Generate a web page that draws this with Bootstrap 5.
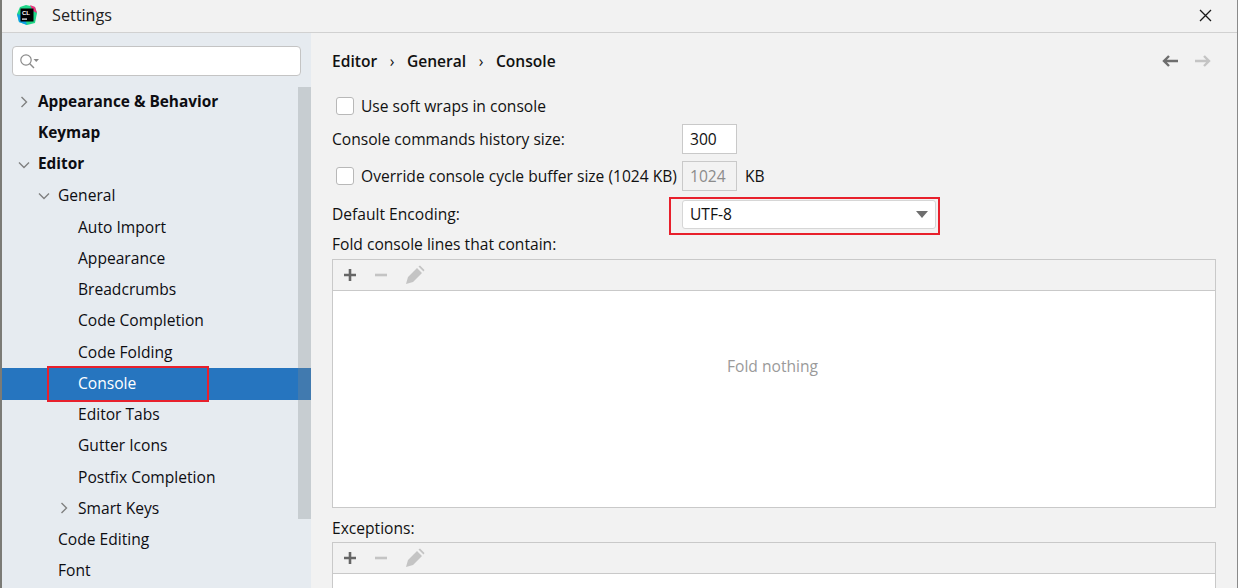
<!DOCTYPE html>
<html lang="en">
<head>
<meta charset="utf-8">
<title>Settings</title>
<link href="https://cdn.jsdelivr.net/npm/bootstrap@5.3.0/dist/css/bootstrap.min.css" rel="stylesheet">
<style>
html,body{height:588px;overflow:hidden;margin:0}
body{background:#f2f2f2;color:#111;font-family:"Open Sans","Noto Sans",sans-serif;font-size:15.6px;line-height:20px}
.win{height:588px;border-left:2px solid #7b7b76;border-right:1px solid #8a8a8a;display:flex;flex-direction:column;overflow:hidden}
.titlebar{height:33px;flex:none;border-bottom:1px solid #d1d1d1;padding-left:14px;padding-right:25px;padding-bottom:2px;background:#f2f2f2}
.titletext{margin-left:14px;color:#222;font-size:16.2px}
.panes{flex:1;min-height:0}
.side{width:309px;flex:none;background:#e6ebf0;position:relative;padding-top:13px;overflow:hidden}
.searchbox{height:30px;margin:0 10px;background:#fff;border:1px solid #c4c4c4;border-radius:4px;padding-left:6px}
.tree{margin-top:10px}
.trow{height:31.25px;display:flex;align-items:center;position:relative;color:#0d0d12}
.trow.bold{font-weight:700;font-size:15.4px}
.l0{padding-left:36px}.l1{padding-left:56px}.l2{padding-left:76px}
.chev{position:absolute;top:10px}
.l0 .chev{left:18px}.l1 .chev{left:38px}.l2 .chev{left:58px}
.chev.down{top:12px}
.l0 .chev.down{left:16px}.l1 .chev.down{left:36px}
.trow.sel{background:#2675bf;color:#fff;height:32px;margin-top:.5px;margin-bottom:-1.25px;padding-bottom:1px}
.redbox{position:absolute;border:2px solid #e8202c;pointer-events:none}
.redconsole{left:45px;top:-2px;width:162px;height:36px}
.thumb{position:absolute;left:296px;top:54px;width:13px;height:432px;background:rgba(130,135,140,.3)}
.content{flex:1;padding:0 21px;min-width:0}
.crumbs{height:56px;margin-bottom:1px;font-weight:600;color:#111}
.crumbs .sep{margin:0 12.5px;font-weight:400}
.backarrow{margin-left:auto}
.fwdarrow{margin-left:15px;margin-right:4px}
.frow{position:relative;display:flex;align-items:center}
.h-soft{height:32px}.h-hist{height:34px}.h-over{height:40px}.h-enc{height:37px}
.h-fold{height:22px;margin-bottom:4px}
.h-exc{height:29px;margin-top:5px}
.chk{width:18px;height:18px;background:#fff;border:1px solid #b8b8b8;border-radius:3px;margin:0 7px 0 4px;flex:none}
.lbl{width:350px;flex:none}
.h-enc .lbl{padding-bottom:1px}
.overlbl{width:321px;white-space:nowrap;flex:none}
.numin{width:55px;height:30px;background:#fff;border:1px solid #c9c9c9;padding-left:7px;display:flex;align-items:center}
.numin.dis{background:#f2f2f2;color:#8c8c8c}
.combo{width:254px;height:29px;background:#fff;border:1px solid #d6d6d6;border-radius:3px;padding:0 7px 1px;display:flex;align-items:center;justify-content:space-between}
.caret{width:0;height:0;border-left:6px solid transparent;border-right:6px solid transparent;border-top:7px solid #6e6e6e}
.redenc{left:337px;top:1px;width:271px;height:38px}
.listbox{border:1px solid #c9c9c9;background:#fff}
.tools{height:31px;background:#f2f2f2;border-bottom:1px solid #c9c9c9;padding-left:10px;gap:17px}
.emptyarea{height:216px;color:#9a9a9a;padding-top:65px;padding-right:3px;text-align:center}
</style>
</head>
<body>
<div class="win">
  <div class="titlebar d-flex align-items-center">
    <svg width="22" height="22" viewBox="0 0 22 22"><path d="M4 3 L10 1 L19 3 L21 9 L19 19 L11 21 L3 18 L1 10Z" fill="#21d789"/><path d="M1 10 L3 18 L11 21 L8 12Z" fill="#0d9ee8"/><path d="M14 1 L19 3 L21 9 L17 7Z" fill="#f0317f"/><rect x="4.5" y="4.5" width="13" height="13" fill="#000"/><rect x="6" y="14.5" width="5" height="1.2" fill="#fff"/><text x="6" y="11" font-size="6" font-weight="700" fill="#fff" font-family="Liberation Sans, sans-serif">CL</text></svg>
    <span class="titletext">Settings</span>
    <svg class="ms-auto" width="13" height="13" viewBox="0 0 13 13"><path d="M1 1 L12 12 M12 1 L1 12" stroke="#1a1a1a" stroke-width="1.3" fill="none"/></svg>
  </div>
  <div class="panes d-flex">
    <div class="side">
      <div class="searchbox d-flex align-items-center">
        <svg width="22" height="18" viewBox="0 0 22 18"><circle cx="7" cy="8" r="5.2" fill="none" stroke="#8a8a8a" stroke-width="1.2"/><path d="M10.8 11.8 L15 16" stroke="#8a8a8a" stroke-width="1.4"/><path d="M14.5 7 L20 7 L17.25 10Z" fill="#8a8a8a"/></svg>
      </div>
      <div class="tree">
        <div class="trow bold l0"><svg class="chev" width="8" height="12" viewBox="0 0 8 12"><path d="M1.5 1 L6.5 6 L1.5 11" fill="none" stroke="#808080" stroke-width="1.4"/></svg>Appearance &amp; Behavior</div>
        <div class="trow bold l0">Keymap</div>
        <div class="trow bold l0"><svg class="chev down" width="12" height="8" viewBox="0 0 12 8"><path d="M1 1.5 L6 6.5 L11 1.5" fill="none" stroke="#808080" stroke-width="1.4"/></svg>Editor</div>
        <div class="trow l1"><svg class="chev down" width="12" height="8" viewBox="0 0 12 8"><path d="M1 1.5 L6 6.5 L11 1.5" fill="none" stroke="#808080" stroke-width="1.4"/></svg>General</div>
        <div class="trow l2">Auto Import</div>
        <div class="trow l2">Appearance</div>
        <div class="trow l2">Breadcrumbs</div>
        <div class="trow l2">Code Completion</div>
        <div class="trow l2">Code Folding</div>
        <div class="trow l2 sel">Console<div class="redbox redconsole"></div></div>
        <div class="trow l2">Editor Tabs</div>
        <div class="trow l2">Gutter Icons</div>
        <div class="trow l2">Postfix Completion</div>
        <div class="trow l2"><svg class="chev" width="8" height="12" viewBox="0 0 8 12"><path d="M1.5 1 L6.5 6 L1.5 11" fill="none" stroke="#808080" stroke-width="1.4"/></svg>Smart Keys</div>
        <div class="trow l1">Code Editing</div>
        <div class="trow l1">Font</div>
      </div>
      <div class="thumb"></div>
    </div>
    <div class="content">
      <div class="crumbs d-flex align-items-center">
        <span>Editor</span><span class="sep">›</span><span>General</span><span class="sep">›</span><span>Console</span>
        <svg class="backarrow" width="18" height="14" viewBox="0 0 18 14"><path d="M17 7 H3 M8 2 L3 7 L8 12" fill="none" stroke="#6e6e6e" stroke-width="2.4"/></svg>
        <svg class="fwdarrow" width="18" height="14" viewBox="0 0 18 14"><path d="M1 7 H15 M10 2 L15 7 L10 12" fill="none" stroke="#c4c4c4" stroke-width="2.4"/></svg>
      </div>
      <div class="frow h-soft"><span class="chk"></span><span>Use soft wraps in console</span></div>
      <div class="frow h-hist"><span class="lbl">Console commands history size:</span><span class="numin">300</span></div>
      <div class="frow h-over"><span class="chk"></span><span class="overlbl">Override console cycle buffer size (1024 KB)</span><span class="numin dis">1024</span><span class="ms-2">KB</span></div>
      <div class="frow h-enc"><span class="lbl">Default Encoding:</span><span class="combo">UTF-8<span class="caret"></span></span><div class="redbox redenc"></div></div>
      <div class="frow h-fold">Fold console lines that contain:</div>
      <div class="listbox">
        <div class="tools d-flex align-items-center">
          <svg width="14" height="14" viewBox="0 0 14 14"><path d="M7 1 V13 M1 7 H13" stroke="#666" stroke-width="2.6"/></svg>
          <svg width="14" height="14" viewBox="0 0 14 14"><path d="M1 7 H13" stroke="#c4c4c4" stroke-width="2.6"/></svg>
          <svg width="20" height="20" viewBox="0 0 20 20"><path d="M1 19 L3 12 L12 3 L17 8 L8 17Z M13.5 1.5 L15 .5 L19.5 5 L18.5 6.5Z" fill="#c4c4c4"/></svg>
        </div>
        <div class="emptyarea">Fold nothing</div>
      </div>
      <div class="frow h-exc">Exceptions:</div>
      <div class="listbox">
        <div class="tools d-flex align-items-center">
          <svg width="14" height="14" viewBox="0 0 14 14"><path d="M7 1 V13 M1 7 H13" stroke="#666" stroke-width="2.6"/></svg>
          <svg width="14" height="14" viewBox="0 0 14 14"><path d="M1 7 H13" stroke="#c4c4c4" stroke-width="2.6"/></svg>
          <svg width="20" height="20" viewBox="0 0 20 20"><path d="M1 19 L3 12 L12 3 L17 8 L8 17Z M13.5 1.5 L15 .5 L19.5 5 L18.5 6.5Z" fill="#c4c4c4"/></svg>
        </div>
        <div class="emptyarea"></div>
      </div>
    </div>
  </div>
</div>
<script src="https://cdn.jsdelivr.net/npm/bootstrap@5.3.0/dist/js/bootstrap.bundle.min.js"></script>
</body>
</html>
